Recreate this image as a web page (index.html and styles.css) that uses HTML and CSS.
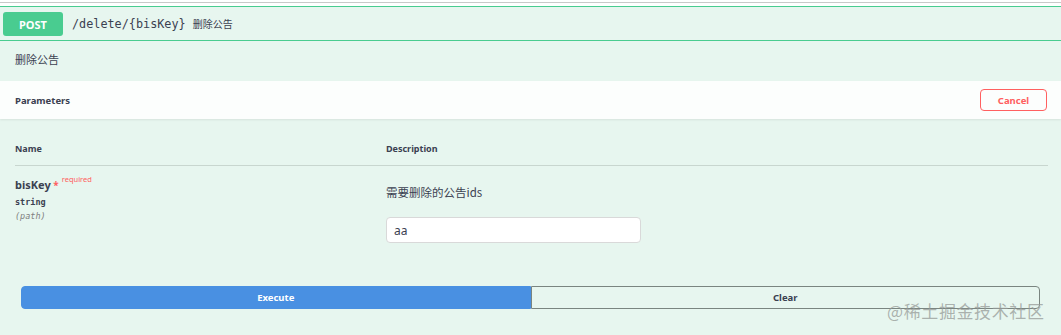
FILE: index.html
```html
<!DOCTYPE html>
<html lang="zh">
<head>
<meta charset="utf-8">
<title>POST /delete/{bisKey}</title>
<link rel="stylesheet" href="styles.css">
</head>
<body>
<div class="topline"></div>
<div class="opblock">
  <div class="summary">
    <span class="method">POST</span>
    <span class="path">/delete/{bisKey}</span>
    <span class="summary-desc">删除公告</span>
  </div>
  <div class="op-desc">删除公告</div>
  <div class="section-header">
    <span class="section-title">Parameters</span>
    <button class="btn-cancel">Cancel</button>
  </div>
  <div class="params">
    <div class="params-head">
      <div class="col-name">Name</div>
      <div class="col-desc">Description</div>
    </div>
    <div class="param-row">
      <div class="col-name">
        <div class="param-name">bisKey<span class="star">&nbsp;*</span><sup class="req">required</sup></div>
        <div class="param-type">string</div>
        <div class="param-in">(path)</div>
      </div>
      <div class="col-desc">
        <div class="param-desc">需要删除的公告ids</div>
        <input class="param-input" type="text" value="aa">
      </div>
    </div>
  </div>
  <div class="execute-wrapper">
    <button class="btn-execute">Execute</button>
    <button class="btn-clear">Clear</button>
  </div>
  <div class="watermark">@稀土掘金技术社区</div>
</div>
</body>
</html>
```
FILE: styles.css
```css
html, body {
  margin: 0;
  padding: 0;
  background: #ffffff;
}
body {
  padding-top: 2px;
  font-family: "Noto Sans", "Noto Sans CJK SC", sans-serif;
  color: #3b4151;
}
.topline {
  height: 1px;
  background: #c9c9c9;
  margin-bottom: 3px;
}
.opblock {
  position: relative;
  background: #e7f6ef;
  border-top: 1px solid #49cc90;
  height: 330px;
}
.summary {
  display: flex;
  align-items: center;
  padding: 0 3px;
  border-bottom: 1px solid #49cc90;
  box-sizing: border-box;
  height: 34px;
}
.method {
  width: 60px;
  height: 24px;
  background: #49cc90;
  color: #fff;
  border-radius: 3px;
  font-size: 11px;
  font-weight: 700;
  display: flex;
  align-items: center;
  justify-content: center;
  margin-top: 1px;
}
.path {
  margin-left: 9px;
  font-family: "DejaVu Sans Mono", monospace;
  font-size: 11.8px;
  color: #3b4151;
}
.summary-desc {
  margin-left: 7px;
  font-family: "Noto Sans CJK SC", sans-serif;
  font-size: 10px;
  color: #3b4151;
}
.op-desc {
  height: 40px;
  box-sizing: border-box;
  padding: 10px 0 0 15px;
  line-height: 16px;
  font-family: "Noto Sans CJK SC", sans-serif;
  font-size: 11px;
}
.section-header {
  height: 38px;
  display: flex;
  align-items: center;
  justify-content: space-between;
  padding: 0 14px 0 15px;
  background: rgba(255, 255, 255, 0.85);
  box-shadow: 0 1px 2px rgba(0, 0, 0, 0.08);
}
.section-title {
  font-size: 9.5px;
  font-weight: 700;
}
.btn-cancel {
  width: 67px;
  height: 22px;
  border: 1px solid #ff6060;
  border-radius: 4px;
  background: transparent;
  color: #ff6060;
  font-family: "Noto Sans", sans-serif;
  font-size: 9.5px;
  font-weight: 700;
  padding: 0;
}
.params {
  padding: 0 13px 0 15px;
}
.params-head {
  display: flex;
  padding-top: 24px;
  padding-bottom: 10px;
  line-height: 12px;
  border-bottom: 1px solid #c8d6cf;
  font-size: 9px;
  font-weight: 700;
}
.col-name {
  width: 371px;
  flex: none;
}
.col-desc {
  flex: 1;
}
.param-row {
  display: flex;
}
.param-row .col-name {
  padding-top: 7px;
}
.param-name {
  font-size: 11px;
  font-weight: 700;
  line-height: 16px;
}
.star {
  color: #ff6060;
  font-size: 10px;
}
.req {
  color: #ff6060;
  font-size: 7.5px;
  font-weight: 400;
  margin-left: 3px;
  position: relative;
  top: -2px;
}
.param-type {
  margin-top: 3px;
  font-family: "DejaVu Sans Mono", monospace;
  font-size: 8.5px;
  line-height: 12px;
  font-weight: 600;
}
.param-in {
  margin-top: 2px;
  font-family: "DejaVu Sans Mono", monospace;
  font-size: 8.5px;
  line-height: 12px;
  font-style: italic;
  color: #808080;
}
.param-row .col-desc {
  padding-top: 18px;
}
.param-desc {
  font-family: "Noto Sans CJK SC", sans-serif;
  font-size: 11.5px;
  line-height: 16px;
  color: #3b4151;
}
.param-input {
  display: block;
  margin-top: 17px;
  width: 255px;
  height: 26px;
  box-sizing: border-box;
  border: 1px solid #d9d9d9;
  border-radius: 4px;
  background: #fff;
  padding: 0 7px;
  font-family: "Noto Sans", sans-serif;
  font-size: 12px;
  color: #3b4151;
}
.execute-wrapper {
  display: flex;
  padding: 43px 21px 0 21px;
}
.btn-execute, .btn-clear {
  flex: 1;
  height: 23px;
  font-family: "Noto Sans", sans-serif;
  font-size: 9.5px;
  font-weight: 700;
  padding: 0;
}
.btn-execute {
  background: #4990e2;
  color: #fff;
  border: 1px solid #4990e2;
  border-radius: 4px 0 0 4px;
}
.btn-clear {
  background: transparent;
  color: #3b4151;
  border: 1px solid #7a8580;
  border-radius: 0 4px 4px 0;
}
.watermark {
  position: absolute;
  left: 887px;
  top: 291px;
  font-family: "Noto Sans CJK SC", sans-serif;
  font-size: 17px;
  color: rgba(150, 155, 152, 0.75);
  letter-spacing: 0.6px;
}
```
